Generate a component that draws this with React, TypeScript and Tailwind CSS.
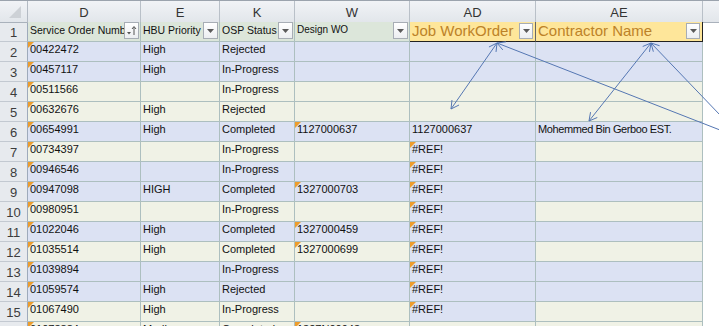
import React from "react";

const BLUE = "bg-[#dce2f3]";
const CREAM = "bg-[#f0f2e6]";

type Row = {
  n: number;
  d: string;
  e: string;
  k: string;
  w: string;
  ad: string;
  ae: string;
  band: "b" | "c";
  adBand: "b" | "c";
  wTri?: boolean;
  adTri?: boolean;
};

const rows: Row[] = [
  { n: 2, d: "00422472", e: "High", k: "Rejected", w: "", ad: "", ae: "", band: "b", adBand: "b" },
  { n: 3, d: "00457117", e: "High", k: "In-Progress", w: "", ad: "", ae: "", band: "b", adBand: "b" },
  { n: 4, d: "00511566", e: "", k: "In-Progress", w: "", ad: "", ae: "", band: "c", adBand: "c" },
  { n: 5, d: "00632676", e: "High", k: "Rejected", w: "", ad: "", ae: "", band: "c", adBand: "c" },
  { n: 6, d: "00654991", e: "High", k: "Completed", w: "1127000637", wTri: true, ad: "1127000637", ae: "Mohemmed Bin Gerboo EST.", band: "b", adBand: "b" },
  { n: 7, d: "00734397", e: "", k: "In-Progress", w: "", ad: "#REF!", adTri: true, ae: "", band: "c", adBand: "b" },
  { n: 8, d: "00946546", e: "", k: "In-Progress", w: "", ad: "#REF!", adTri: true, ae: "", band: "b", adBand: "b" },
  { n: 9, d: "00947098", e: "HIGH", k: "Completed", w: "1327000703", wTri: true, ad: "#REF!", adTri: true, ae: "", band: "b", adBand: "b" },
  { n: 10, d: "00980951", e: "", k: "In-Progress", w: "", ad: "#REF!", adTri: true, ae: "", band: "c", adBand: "b" },
  { n: 11, d: "01022046", e: "High", k: "Completed", w: "1327000459", wTri: true, ad: "#REF!", adTri: true, ae: "", band: "b", adBand: "b" },
  { n: 12, d: "01035514", e: "High", k: "Completed", w: "1327000699", wTri: true, ad: "#REF!", adTri: true, ae: "", band: "c", adBand: "b" },
  { n: 13, d: "01039894", e: "", k: "In-Progress", w: "", ad: "#REF!", adTri: true, ae: "", band: "b", adBand: "b" },
  { n: 14, d: "01059574", e: "High", k: "Rejected", w: "", ad: "#REF!", adTri: true, ae: "", band: "b", adBand: "b" },
  { n: 15, d: "01067490", e: "High", k: "In-Progress", w: "", ad: "#REF!", adTri: true, ae: "", band: "c", adBand: "b" },
  { n: 16, d: "01073884", e: "Medium", k: "Completed", w: "1327N00943", wTri: true, ad: "", ae: "", band: "c", adBand: "c" },
];

const GRID = "grid grid-cols-[28px_113px_79px_75px_115px_126px_167px_16px]";
const FONT = { fontFamily: '"Liberation Sans", Arial, sans-serif' } as React.CSSProperties;

function Tri() {
  return (
    <span className="absolute left-0 top-0 w-[6px] h-[6px] bg-[#ee9d2c] [clip-path:polygon(0_0,100%_0,0_100%)]" />
  );
}

function Cell({ text, bg, tri, narrow }: { text: string; bg: string; tri?: boolean; narrow?: boolean }) {
  return (
    <div className={`relative h-[20px] border-r border-b border-[#adbfbf] ${bg} pl-[2px] overflow-hidden whitespace-nowrap text-[11px] leading-[13px] pt-[1px] text-[#111] ${narrow ? "tracking-[-0.4px]" : ""}`}>
      {tri && <Tri />}
      {text}
    </div>
  );
}

function DropBtn({ sort }: { sort?: boolean }) {
  return (
    <div className="shrink-0 mr-[1px] w-[15px] h-[17px] border border-[#a7adb5] bg-gradient-to-b from-white to-[#eceef1] flex items-center justify-center">
      {sort ? (
        <svg width="11" height="11" viewBox="0 0 11 11">
          <path d="M1 7 L5 7 L3 9.5 Z" fill="#555" />
          <line x1="8" y1="2" x2="8" y2="10" stroke="#555" strokeWidth="1" />
          <path d="M6 4 L8 1.5 L10 4" fill="none" stroke="#555" strokeWidth="1" />
        </svg>
      ) : (
        <svg width="7" height="4" viewBox="0 0 7 4">
          <path d="M0 0 L7 0 L3.5 4 Z" fill="#5a5a5a" />
        </svg>
      )}
    </div>
  );
}

function HeadCell({ text, sort, small }: { text: string; sort?: boolean; small?: boolean }) {
  return (
    <div className="h-[20px] border-r border-b border-[#adbfbf] bg-[#dce6da] flex items-start pl-[2px]">
      <span className={`flex-1 min-w-0 overflow-hidden whitespace-nowrap text-[#111] ${small ? "text-[10px] leading-[13px] pt-[1px]" : "text-[10.5px] leading-[13px] pt-[2px]"}`}>
        {text}
      </span>
      <DropBtn sort={sort} />
    </div>
  );
}

function YellowCell({ text, last }: { text: string; last?: boolean }) {
  return (
    <div className={`h-[20px] border-b border-[#222] ${last ? "border-r border-r-[#222]" : "border-r border-r-[#666]"} bg-[#fee69a] flex items-start pl-[2px]`}>
      <span className="flex-1 min-w-0 overflow-hidden whitespace-nowrap text-[15px] leading-[18px] text-[#bd8228]">{text}</span>
      <div className="shrink-0 mr-[2px] mt-[1px] w-[14px] h-[16px] border border-[#a7adb5] bg-gradient-to-b from-white to-[#eceef1] flex items-center justify-center">
        <svg width="7" height="4" viewBox="0 0 7 4">
          <path d="M0 0 L7 0 L3.5 4 Z" fill="#5a5a5a" />
        </svg>
      </div>
    </div>
  );
}

function RowNum({ n }: { n: number }) {
  return (
    <div className="h-[20px] border-r border-b border-r-[#9eaabb] border-b-[#c3c9d1] bg-[#e7eaee] text-center text-[13px] leading-[20px] pt-[1px] text-[#3c3c3c]">
      {n}
    </div>
  );
}

function arrowHead(tx: number, ty: number, fx: number, fy: number, len = 9, ang = 0.5) {
  const dx = fx - tx;
  const dy = fy - ty;
  const L = Math.hypot(dx, dy);
  const ux = dx / L;
  const uy = dy / L;
  const r = (a: number) => [ux * Math.cos(a) - uy * Math.sin(a), ux * Math.sin(a) + uy * Math.cos(a)];
  const [ax, ay] = r(ang);
  const [bx, by] = r(-ang);
  return `M${tx + ax * len} ${ty + ay * len} L${tx} ${ty} L${tx + bx * len} ${ty + by * len}`;
}

function Arrows() {
  const c = "#5577b3";
  const lines: [number, number, number, number, boolean, boolean][] = [
    [497, 43, 451, 109, true, true],
    [497, 43, 720, 130, true, false],
    [651, 43, 589, 121, true, true],
    [651, 43, 720, 115, true, false],
  ];
  return (
    <svg className="absolute left-0 top-0 pointer-events-none" width="719" height="326" viewBox="0 0 719 326">
      {lines.map(([x1, y1, x2, y2, s, e], i) => (
        <g key={i} stroke={c} strokeWidth="1" fill="none">
          <line x1={x1} y1={y1} x2={x2} y2={y2} />
          {s && <path d={arrowHead(x1, y1, x2, y2)} />}
          {e && <path d={arrowHead(x2, y2, x1, y1)} />}
        </g>
      ))}
    </svg>
  );
}

export default function App() {
  const letters = ["D", "E", "K", "W", "AD", "AE"];
  return (
    <div className="relative w-[719px] h-[326px] overflow-hidden bg-white" style={FONT}>
      {/* column letters */}
      <div className={`${GRID} h-[22px] border-t border-[#9ba3ad] bg-gradient-to-b from-[#f1f3f6] to-[#e2e6eb]`}>
        <div className="relative border-r border-b border-r-[#b3bac3] border-b-[#a9b1bb]">
          <svg className="absolute left-0 top-0" width="27" height="20" viewBox="0 0 27 20">
            <path d="M21 5 L21 17 L9 17 Z" fill="#cdd1d6" />
          </svg>
        </div>
        {letters.map((l) => (
          <div key={l} className="border-r border-b border-r-[#b9c0c8] border-b-[#a9b1bb] text-center text-[13px] leading-[19px] pt-[2px] text-[#333]">
            {l}
          </div>
        ))}
        <div className="border-b border-b-[#a9b1bb]" />
      </div>
      {/* header row 1 */}
      <div className={GRID}>
        <RowNum n={1} />
        <HeadCell text="Service Order Number" sort />
        <HeadCell text="HBU Priority" />
        <HeadCell text="OSP Status" />
        <HeadCell text="Design WO" small />
        <YellowCell text="Job WorkOrder" />
        <YellowCell text="Contractor Name" last />
        <div />
      </div>
      {rows.map((r) => {
        const bg = r.band === "b" ? BLUE : CREAM;
        const adbg = r.adBand === "b" ? BLUE : CREAM;
        return (
          <div key={r.n} className={GRID}>
            <RowNum n={r.n} />
            <Cell text={r.d} bg={bg} tri />
            <Cell text={r.e} bg={bg} />
            <Cell text={r.k} bg={bg} />
            <Cell text={r.w} bg={bg} tri={r.wTri} />
            <Cell text={r.ad} bg={adbg} tri={r.adTri} />
            <Cell text={r.ae} bg={bg} narrow />
            <div />
          </div>
        );
      })}
      <Arrows />
    </div>
  );
}
